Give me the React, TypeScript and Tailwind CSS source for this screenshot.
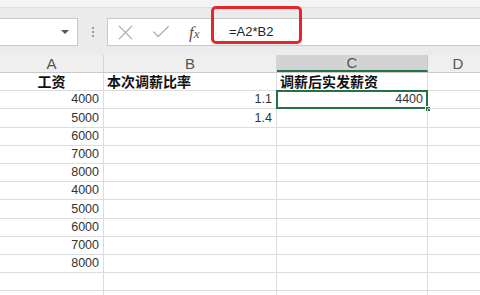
import { Check, X } from "lucide-react";

type Align = "left" | "right" | "center";

interface Cell {
  text: string;
  align?: Align;
  bold?: boolean;
}

const salaries = ["4000", "5000", "6000", "7000", "8000", "4000", "5000", "6000", "7000", "8000"];

const rows: Cell[][] = [
  [
    { text: "工资", align: "center", bold: true },
    { text: "本次调薪比率", bold: true },
    { text: "调薪后实发薪资", bold: true },
    { text: "" },
  ],
  ...salaries.map((s, i) => [
    { text: s, align: "right" as Align },
    { text: i === 0 ? "1.1" : i === 1 ? "1.4" : "", align: "right" as Align },
    { text: i === 0 ? "4400" : "", align: "right" as Align },
    { text: "" },
  ]),
  [{ text: "" }, { text: "" }, { text: "" }, { text: "" }],
  [{ text: "" }, { text: "" }, { text: "" }, { text: "" }],
];

const alignClass: Record<Align, string> = {
  left: "justify-start pl-[3px]",
  right: "justify-end pr-[4px]",
  center: "justify-center",
};

function FormulaBar() {
  return (
    <div className="relative h-[47px] bg-[#ebebeb] flex items-start pt-[10px]">
      {/* name box */}
      <div className="w-[78px] h-[28px] bg-white border border-[#c8c8c8] border-l-0 flex items-center justify-end pr-[8px]">
        <span className="w-0 h-0 border-l-[4px] border-r-[4px] border-t-[4px] border-l-transparent border-r-transparent border-t-[#555]" />
      </div>
      {/* splitter dots */}
      <div className="w-[29px] h-[28px] flex flex-col items-center justify-center gap-[2px]">
        <span className="w-[2px] h-[2px] bg-[#9a9a9a]" />
        <span className="w-[2px] h-[2px] bg-[#9a9a9a]" />
        <span className="w-[2px] h-[2px] bg-[#9a9a9a]" />
      </div>
      {/* formula input */}
      <div className="flex-1 h-[28px] bg-white border border-[#c8c8c8] border-r-0 flex items-center">
        <div className="w-[104px] flex items-center">
          <X size={25} strokeWidth={1.2} className="ml-[5px] text-[#b2b2b2]" />
          <Check size={22} strokeWidth={1.5} className="ml-[12px] text-[#b2b2b2]" />
          <span className="ml-[17px] font-['Liberation_Serif'] italic text-[17px] text-[#555] leading-none">
            f<span className="text-[13px]">x</span>
          </span>
        </div>
        <span className="ml-[17px] text-[13px] text-[#222] font-['Liberation_Sans']">=A2*B2</span>
      </div>
      {/* annotation */}
      <div className="absolute left-[211px] top-[-2px] w-[91px] h-[38px] border-[3px] border-[#e8252b] rounded-[5px]" />
    </div>
  );
}

export default function App() {
  const cols = "grid grid-cols-[104px_173px_151px_60px]";
  return (
    <div className="w-[480px] h-[295px] overflow-hidden bg-white font-['Liberation_Sans','Noto_Sans_CJK_SC',sans-serif]">
      <div className="h-[8px] bg-[#f4f4f4] border-b border-[#dedede]" />
      <FormulaBar />

      {/* column headers */}
      <div className={`${cols} h-[18px] bg-[#efefef] border-b border-[#c9c9c9] text-[15px] text-[#555]`}>
        <div className="border-r border-[#d4d4d4] flex items-center justify-center leading-none">A</div>
        <div className="border-r border-[#d4d4d4] flex items-center justify-center leading-none">B</div>
        <div className="bg-[#d3d3d3] border-r border-[#c4c4c4] border-b-2 border-b-[#217346] flex items-center justify-center leading-none">
          C
        </div>
        <div className="flex items-center justify-center leading-none">D</div>
      </div>

      {/* cells */}
      {rows.map((row, r) => (
        <div key={r} className={`${cols} h-[18.2px]`}>
          {row.map((cell, c) => {
            const selected = r === 1 && c === 2;
            return (
              <div
                key={c}
                className={`relative flex items-end pb-[1px] border-b border-[#dcdcdc] ${
                  c < 3 ? "border-r" : ""
                } ${alignClass[cell.align ?? "left"]} ${
                  cell.bold
                    ? "font-bold text-[14px] text-[#111] font-['Noto_Sans_CJK_SC',sans-serif] leading-[16px]"
                    : "text-[12.5px] text-[#333] leading-[15px]"
                }`}
              >
                {cell.text}
                {selected && (
                  <>
                    <div className="absolute left-[-1px] top-[-1px] right-[-1px] bottom-[-1px] border-2 border-[#217346]" />
                    <div className="absolute right-[-4px] bottom-[-4px] w-[6px] h-[6px] bg-[#217346] border border-white" />
                  </>
                )}
              </div>
            );
          })}
        </div>
      ))}
    </div>
  );
}
